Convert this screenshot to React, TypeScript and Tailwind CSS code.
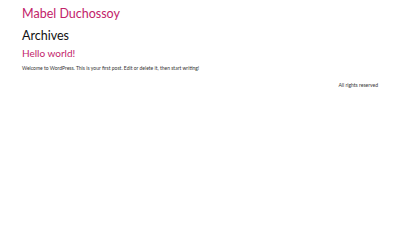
export default function App() {
  return (
    <div className="min-h-[250px] bg-white px-[22px] pt-[4px] font-['Lato','Noto_Sans',sans-serif]">
      <header>
        <a href="#" className="block text-[12.5px] leading-[20px] text-[#c2226a]">
          Mabel Duchossoy
        </a>
      </header>
      <main>
        <h1 className="mt-[3px] text-[12.5px] leading-[18px] text-[#111]">Archives</h1>
        <article>
          <h2 className="text-[10px] leading-[16px] text-[#c2226a]">Hello world!</h2>
          <p className="mt-[3px] text-[5px] leading-[8px] text-[#333]">
            Welcome to WordPress. This is your first post. Edit or delete it, then start writing!
          </p>
        </article>
      </main>
      <footer className="mt-[9px] flex justify-end">
        <span className="text-[5px] leading-[8px] text-[#333]">All rights reserved</span>
      </footer>
    </div>
  );
}
